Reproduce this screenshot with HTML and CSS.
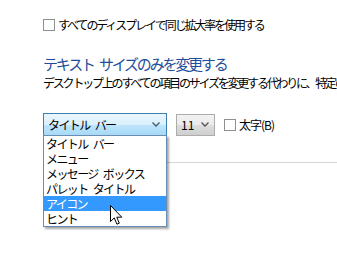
FILE: index.html
```html
<!DOCTYPE html>
<html lang="ja">
<head>
<meta charset="utf-8">
<title>テキスト サイズ</title>
<link rel="stylesheet" href="styles.css">
</head>
<body>

<div class="page">
  <label class="check-row">
    <span class="box"></span>
    <span>すべてのディスプレイで同じ拡大率を使用する</span>
  </label>

  <h2 class="title">テキスト サイズのみを変更する</h2>
  <p class="desc">デスクトップ上のすべての項目のサイズを変更する代わりに、特定の項目のテキスト サイズのみを変更します。</p>

  <div class="controls">
    <div class="combo">
      <div class="combo-face">
        <span>タイトル バー</span>
        <svg class="chev" width="8" height="5" viewBox="0 0 8 5"><path d="M0.5 0.5 L4 4 L7.5 0.5" fill="none" stroke="#4a5a6e" stroke-width="1.4"/></svg>
      </div>
      <ul class="combo-list">
        <li>タイトル バー</li>
        <li>メニュー</li>
        <li>メッセージ ボックス</li>
        <li>パレット タイトル</li>
        <li class="selected">アイコン</li>
        <li>ヒント</li>
      </ul>
      <svg class="cursor" width="13" height="21" viewBox="0 0 13 21"><path d="M0.5 0.5 L0.5 16.5 L4.3 12.9 L6.9 19.2 L9.3 18.2 L6.8 12.2 L11.8 12.2 Z" fill="#fff" stroke="#000" stroke-width="1" stroke-linejoin="miter"/></svg>
    </div>

    <div class="size-select">
      <span>11</span>
      <svg class="chev" width="8" height="5" viewBox="0 0 8 5"><path d="M0.5 0.5 L4 4 L7.5 0.5" fill="none" stroke="#555" stroke-width="1.4"/></svg>
    </div>

    <label class="bold-check">
      <span class="box"></span>
      <span>太字(B)</span>
    </label>
  </div>

  <div class="separator"></div>
</div>

</body>
</html>
```

FILE: styles.css
```css
* {
  box-sizing: border-box;
}

body {
  margin: 0;
  background: #fff;
  font-family: "Noto Sans CJK JP", "Noto Sans", sans-serif;
  color: #000;
}

.page {
  padding-left: 43px;
  padding-top: 17px;
  min-height: 256px;
  overflow: hidden;
}

.box {
  display: inline-block;
  width: 12px;
  height: 12px;
  border: 1px solid #8e8f8f;
  background: #fff;
  flex: none;
}

/* top checkbox */
.check-row {
  display: flex;
  align-items: center;
  gap: 3px;
  height: 15px;
  font-size: 12px;
  letter-spacing: -2.1px;
  white-space: nowrap;
}

.title {
  margin: 22px 0 0;
  font-size: 15px;
  line-height: 20px;
  font-weight: normal;
  letter-spacing: -2.2px;
  word-spacing: 4px;
  color: #1e4e9b;
  white-space: nowrap;
}

.desc {
  margin: 1px 0 0;
  font-size: 12px;
  line-height: 16px;
  letter-spacing: -2.2px;
  white-space: nowrap;
  overflow: hidden;
}

/* controls */
.controls {
  margin-top: 22px;
  display: flex;
  align-items: center;
  height: 23px;
  font-size: 12px;
}

.combo {
  position: relative;
  width: 124px;
  height: 23px;
}

.combo-face {
  height: 23px;
  border: 1px solid #3c7fb1;
  background: linear-gradient(#eaf6fd 0%, #d9f0fc 50%, #bee6fd 51%, #a7d9f5 100%);
  display: flex;
  align-items: center;
  justify-content: space-between;
  padding: 0 6px 0 4px;
  letter-spacing: -1.6px;
  word-spacing: 4px;
  white-space: nowrap;
}

.combo-list {
  position: absolute;
  top: 22px;
  left: 0;
  width: 124px;
  margin: 0;
  padding: 0;
  list-style: none;
  background: #fff;
  border: 1px solid #6a8db5;
  box-shadow: 2px 2px 2px rgba(0, 0, 0, 0.35);
  z-index: 2;
}

.combo-list li {
  height: 15px;
  line-height: 15px;
  padding-left: 2px;
  letter-spacing: -1.6px;
  word-spacing: 4px;
  white-space: nowrap;
}

.combo-list li.selected {
  background: #3399ff;
  color: #fff;
}

.cursor {
  position: absolute;
  left: 67px;
  top: 92px;
  z-index: 3;
}

.size-select {
  margin-left: 9px;
  width: 39px;
  height: 22px;
  border: 1px solid #acacac;
  background: linear-gradient(#f2f2f2 0%, #ebebeb 50%, #dddddd 51%, #cfcfcf 100%);
  display: flex;
  align-items: center;
  justify-content: space-between;
  padding: 0 5px 0 4px;
}

.bold-check {
  margin-left: 9px;
  display: flex;
  align-items: center;
  gap: 3px;
  white-space: nowrap;
}

.bold-check span:last-child {
  letter-spacing: -1px;
}

.separator {
  margin-top: 26px;
  height: 1px;
  background: #d5d5d5;
}
```
